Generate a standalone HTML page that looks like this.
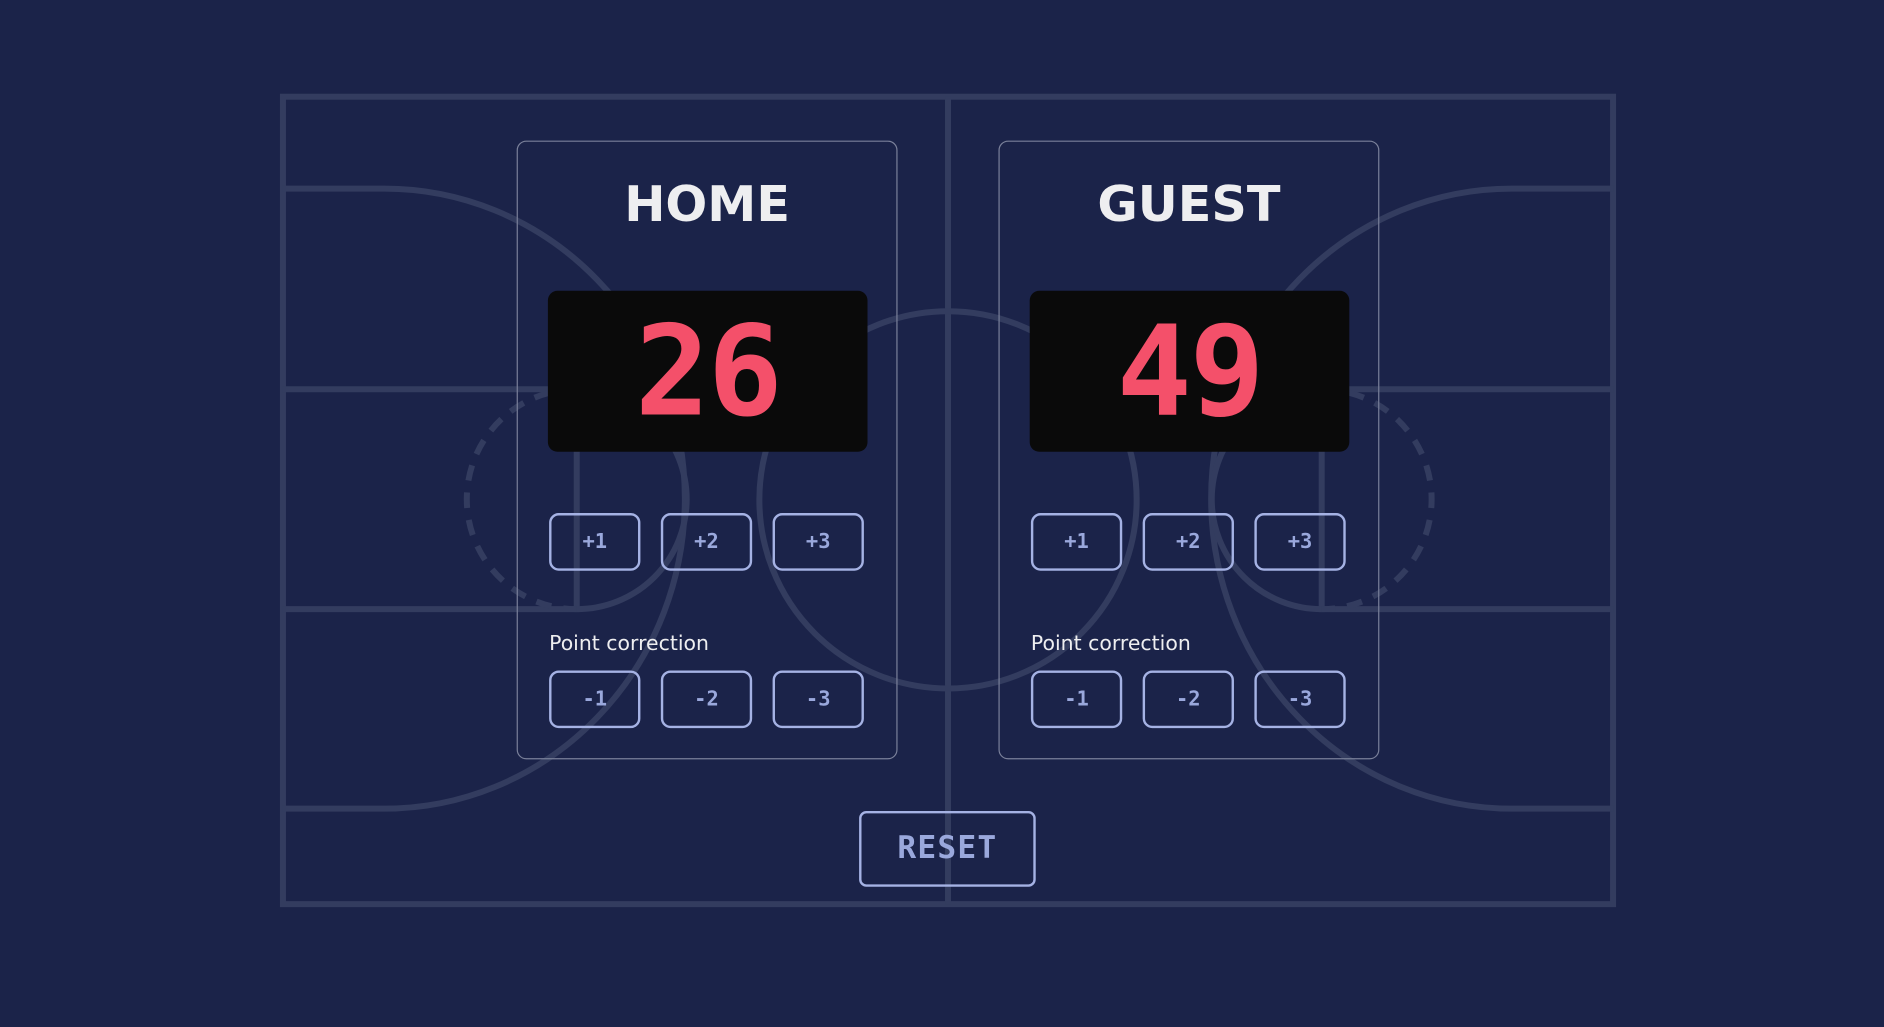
<!DOCTYPE html>
<html><head><meta charset="utf-8"><style>
html,body{margin:0;padding:0;width:1884px;height:1027px;overflow:hidden;background:#1b2349;}
#s{position:absolute;left:0;top:0;width:1568px;height:855px;transform:scale(1.20153);transform-origin:0 0;font-family:"DejaVu Sans","Liberation Sans",sans-serif;}
svg.court{position:absolute;left:0;top:0;}
.card{position:absolute;top:117px;width:317px;height:515px;border:1px solid #7a809a;border-radius:8px;box-sizing:border-box;}
.card h1{position:absolute;left:0;right:0;margin:0;text-align:center;font-size:41px;font-weight:bold;color:#eeeef0;line-height:1;top:32px;}
.score{position:absolute;left:25px;top:124px;width:266px;height:134px;background:#0a0a0a;border-radius:8px;text-align:center;color:#f4506a;font-family:"DejaVu Sans Mono",monospace;font-weight:bold;font-size:104px;line-height:134px;letter-spacing:-2px;}
.btn{position:absolute;width:76px;height:48px;border:2px solid #a5b2e4;border-radius:8px;box-sizing:border-box;color:#9aa8dc;font-family:"DejaVu Sans Mono",monospace;font-weight:bold;font-size:17px;text-align:center;line-height:44px;}
.lbl{position:absolute;left:26px;top:408px;font-size:17px;color:#eeeef0;}
.reset{position:absolute;left:715px;top:675px;width:147px;height:63px;border:2px solid #a5b2e4;border-radius:6px;box-sizing:border-box;color:#9aa8dc;font-family:"DejaVu Sans Mono",monospace;font-weight:bold;font-size:26px;text-align:center;line-height:58px;letter-spacing:1px;}
</style></head><body><div id="s">
<svg class="court" width="1568" height="855" viewBox="0 0 1568 855">
<g fill="none" stroke="#333c5f" stroke-width="5">
<rect x="235.5" y="80.5" width="1107" height="672"/>
<line x1="789" y1="80" x2="789" y2="753"/>
<circle cx="789" cy="416" r="157"/>
<path d="M235 157 H320 A250 258 0 0 1 320 673 H235"/>
<path d="M235 324 H480 V507 H235"/>
<path d="M480 324 A91 91 0 0 1 480 507"/>
<path d="M480 324 A91 91 0 0 0 480 507" stroke-dasharray="13 10"/>
<path d="M1343 157 H1258 A250 258 0 0 0 1258 673 H1343"/>
<path d="M1343 324 H1100 V507 H1343"/>
<path d="M1100 324 A91 91 0 0 0 1100 507"/>
<path d="M1100 324 A91 91 0 0 1 1100 507" stroke-dasharray="13 10"/>
</g></svg>

<div class="card" style="left:430px">
<h1>HOME</h1>
<div class="score">26</div>
<div class="btn" style="left:26px;top:309px">+1</div>
<div class="btn" style="left:119px;top:309px">+2</div>
<div class="btn" style="left:212px;top:309px">+3</div>
<div class="lbl">Point correction</div>
<div class="btn" style="left:26px;top:440px">-1</div>
<div class="btn" style="left:119px;top:440px">-2</div>
<div class="btn" style="left:212px;top:440px">-3</div>
</div>

<div class="card" style="left:831px">
<h1>GUEST</h1>
<div class="score">49</div>
<div class="btn" style="left:26px;top:309px">+1</div>
<div class="btn" style="left:119px;top:309px">+2</div>
<div class="btn" style="left:212px;top:309px">+3</div>
<div class="lbl">Point correction</div>
<div class="btn" style="left:26px;top:440px">-1</div>
<div class="btn" style="left:119px;top:440px">-2</div>
<div class="btn" style="left:212px;top:440px">-3</div>
</div>

<div class="reset">RESET</div>
</div></body></html>
